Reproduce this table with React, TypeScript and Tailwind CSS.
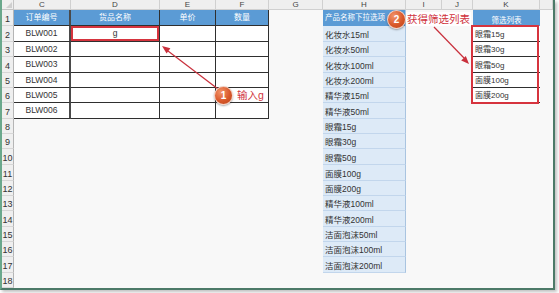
import React from 'react'

const COLS = ['C', 'D', 'E', 'F', 'G', 'H', 'I', 'J', 'K', '']

const ORDERS = ['BLW001', 'BLW002', 'BLW003', 'BLW004', 'BLW005', 'BLW006']
const MAIN_HEAD = ['订单编号', '货品名称', '单价', '数量']

const OPTIONS = [
  '化妆水15ml', '化妆水50ml', '化妆水100ml', '化妆水200ml',
  '精华液15ml', '精华液50ml', '眼霜15g', '眼霜30g', '眼霜50g',
  '面膜100g', '面膜200g', '精华液100ml', '精华液200ml',
  '洁面泡沫50ml', '洁面泡沫100ml', '洁面泡沫200ml',
]

const FILTERED = ['眼霜15g', '眼霜30g', '眼霜50g', '面膜100g', '面膜200g']

function Cell({ r, c }: { r: number; c: number }) {
  // 列标题行
  if (r === 0) {
    if (c === 0)
      return (
        <div className="relative bg-[#efefef] border-r border-b border-[#c4c4c4]">
          <div className="absolute right-[1px] bottom-[1px] w-0 h-0 border-l-[6px] border-l-transparent border-b-[6px] border-b-[#cfcfcf]" />
        </div>
      )
    return (
      <div className="flex items-center justify-center bg-[#efefef] border-r border-b border-[#d0d0d0] text-[8px] leading-none text-[#444]">
        {COLS[c - 1]}
      </div>
    )
  }

  // 行号
  if (c === 0)
    return (
      <div className="flex items-end justify-center pb-[1px] bg-[#efefef] border-r border-b border-r-[#b5b5b5] border-b-[#d6d6d6] text-[9px] leading-none text-[#333]">
        {r}
      </div>
    )

  // 订单表 C1:F7
  if (c >= 1 && c <= 4 && r <= 7) {
    const thick = c === 1 ? 'border-r-2 border-r-[#4a4a4a]' : 'border-r border-r-[#2f2f2f]'
    if (r === 1)
      return (
        <div className={`flex items-center justify-center bg-[#5b9bd5] border-b border-b-[#2f2f2f] ${thick} text-[8px] leading-none text-white`}>
          {MAIN_HEAD[c - 1]}
        </div>
      )
    const selected = r === 2 && c === 2
    return (
      <div
        className={`flex items-center justify-center bg-white border-b border-b-[#2f2f2f] ${thick} text-[8.5px] leading-none text-[#333] ${
          selected ? 'shadow-[inset_0_0_0_2px_#d6343e]' : ''
        }`}
      >
        {c === 1 ? ORDERS[r - 2] : selected ? 'g' : ''}
      </div>
    )
  }

  // 下拉选项 H
  if (c === 6 && r <= 17) {
    if (r === 1)
      return (
        <div className="flex items-center pl-[2px] bg-[#5b9bd5] border-r border-r-[#a9c4e0] text-[7.5px] leading-none text-white whitespace-nowrap overflow-hidden">
          产品名称下拉选项
        </div>
      )
    return (
      <div className="flex items-end pl-[2px] pb-[2px] bg-[#ddeaf7] border-r border-b border-r-[#a9c4e0] border-b-[#c2d6ec] text-[8.5px] leading-none text-[#333] whitespace-nowrap">
        {OPTIONS[r - 2]}
      </div>
    )
  }

  // 筛选列表 K
  if (c === 9 && r <= 6) {
    if (r === 1)
      return (
        <div className="flex items-end justify-center pb-[2px] bg-[#5b9bd5] text-[7.5px] leading-none text-white">
          筛选列表
        </div>
      )
    return (
      <div className="flex items-end pl-[2px] pb-[2px] bg-white border-b border-b-[#2f2f2f] text-[8px] leading-none text-[#333] whitespace-nowrap">
        {FILTERED[r - 2]}
      </div>
    )
  }

  return <div className="bg-[#f8f8f8]" />
}

function Arrows() {
  return (
    <svg className="absolute inset-0 pointer-events-none" width="559" height="293" viewBox="0 0 559 293">
      <line x1="218" y1="89" x2="168" y2="51" stroke="#c9303c" strokeWidth="1.2" />
      <polygon points="162,46 170.4,48.3 166.6,53.5" fill="#c9303c" />
      <line x1="434" y1="27" x2="464" y2="58" stroke="#c9303c" strokeWidth="1.2" />
      <polygon points="469,64 461.2,60.4 465.8,55.9" fill="#c9303c" />
    </svg>
  )
}

function Badge({ n, className }: { n: number; className: string }) {
  return (
    <div
      className={`absolute w-[19px] h-[19px] rounded-full flex items-center justify-center border border-white/70 bg-[radial-gradient(circle_at_35%_30%,#f2946a,#d9582a_55%,#b9461c)] shadow-[0_1px_2px_rgba(0,0,0,0.35)] text-white text-[10px] font-bold leading-none ${className}`}
    >
      {n}
    </div>
  )
}

export default function App() {
  const rows = Array.from({ length: 19 }, (_, i) => i)
  const cols = Array.from({ length: 11 }, (_, i) => i)

  return (
    <div className="relative w-[559px] h-[293px] bg-white overflow-hidden font-['Liberation_Sans','Noto_Sans_CJK_SC',sans-serif]">
      {/* 表格窗口 */}
      <div className="relative w-[555px] h-[290px] border-l-2 border-l-[#6aa88c] border-r-2 border-b-2 border-r-[#4c7a68] border-b-[#4c7a68] shadow-[2px_2px_3px_rgba(0,0,0,0.25)] overflow-hidden bg-[#f8f8f8]">
        <div className="grid grid-cols-[12px_57px_89px_56px_53px_54px_83px_36px_31px_67px_1fr] grid-rows-[10px_16px_16px_15px_16px_15px_15px_16px_15px_15px_16px_16px_15px_15px_16px_15px_15px_16px_15px]">
          {rows.map((r) => cols.map((c) => <Cell key={`${r}-${c}`} r={r} c={c} />))}
        </div>

        {/* 筛选结果红框 */}
        <div className="absolute left-[469px] top-[25px] w-[68px] h-[79px] border-2 border-[#d6343e] pointer-events-none" />
      </div>

      <Arrows />

      <Badge n={1} className="left-[214px] top-[86px]" />
      <div className="absolute left-[236px] top-[88px] text-[10.5px] leading-[14px] text-[#d0323c] bg-white px-[1px]">
        输入g
      </div>

      <Badge n={2} className="left-[387px] top-[10px]" />
      <div className="absolute left-[406px] top-[12px] text-[10.5px] leading-[14px] text-[#d0323c] bg-white px-[1px]">
        获得筛选列表
      </div>
    </div>
  )
}
